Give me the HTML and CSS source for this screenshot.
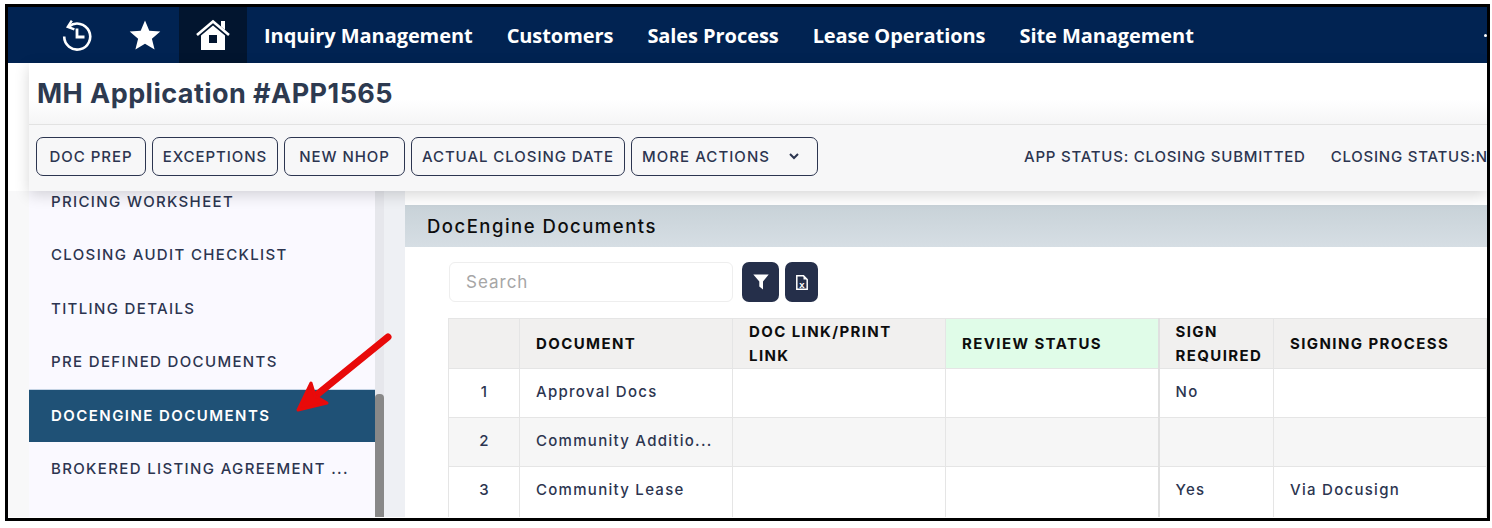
FILE: index.html
```html
<!DOCTYPE html>
<html lang="en">
<head>
<meta charset="utf-8">
<title>MH Application #APP1565</title>
<link rel="stylesheet" href="styles.css">
</head>
<body>
<div class="frame">
  <nav class="nav">
    <a class="nav-icon nav-history">
      <svg width="32" height="32" viewBox="0 0 32 32" fill="none" stroke="#fff" stroke-width="2.6">
        <path d="M8 7.5A13 13 0 1 1 3.2 17.5"/>
        <path d="M10.8 1.6 6.8 7.8l6.6 2.6" stroke-width="2.4"/>
        <path d="M16 9.5V18h7.5" stroke-width="2.8"/>
      </svg>
    </a>
    <a class="nav-icon nav-star">
      <svg width="32" height="32" viewBox="0 0 32 32"><path fill="#fff" d="M16 1.5l4.3 10.3 11 .8-8.4 7.2 2.7 10.8L16 24.8 6.400 30.600l2.700-10.800-8.400-7.200 11-.8z"/></svg>
    </a>
    <a class="nav-home">
      <svg width="34" height="32" viewBox="0 0 34 32">
        <path fill="none" stroke="#fff" stroke-width="2.600" d="M1 16 17 2.500 33 16"/>
        <path fill="#fff" d="M25 2h4v9l-4-3.400z"/>
        <path fill="#fff" fill-rule="evenodd" d="M17 6.500 29 16.500V31H5V16.500zM13 16v8h8v-8z"/>
      </svg>
    </a>
    <ul class="nav-menu">
      <li>Inquiry Management</li>
      <li>Customers</li>
      <li>Sales Process</li>
      <li>Lease Operations</li>
      <li>Site Management</li>
    </ul>
    <span class="nav-dot"></span>
  </nav>

  <div class="workspace">
    <header class="page-head">
      <h1 class="page-title">MH Application #APP1565</h1>
      <div class="actions">
        <button class="btn">DOC PREP</button>
        <button class="btn">EXCEPTIONS</button>
        <button class="btn">NEW NHOP</button>
        <button class="btn">ACTUAL CLOSING DATE</button>
        <button class="btn btn-more">MORE ACTIONS
          <svg width="10" height="7" viewBox="0 0 10 7" fill="none" stroke="#2c3550" stroke-width="2"><path d="M1 1l4 4 4-4"/></svg>
        </button>
        <span class="status status-app">APP STATUS: CLOSING SUBMITTED</span>
        <span class="status status-closing">CLOSING STATUS:NOT STARTED</span>
      </div>
    </header>

    <div class="content">
      <div class="gutter"></div>
      <aside class="sidebar">
        <ul class="side-list">
          <li>PRICING WORKSHEET</li>
          <li>CLOSING AUDIT CHECKLIST</li>
          <li>TITLING DETAILS</li>
          <li>PRE DEFINED DOCUMENTS</li>
          <li class="active">DOCENGINE DOCUMENTS</li>
          <li>BROKERED LISTING AGREEMENT ...</li>
          <li>ASSIGNED TEAM</li>
        </ul>
      </aside>
      <div class="scroll-track"><div class="scroll-thumb"></div></div>
      <main class="main">
        <section class="panel">
          <h2 class="panel-title">DocEngine Documents</h2>
          <div class="toolbar">
            <div class="search">Search</div>
            <button class="icon-btn icon-filter">
              <svg width="16" height="16" viewBox="0 0 16 16"><path fill="#fff" d="M0.300 0.500h15.400L10 7.500v8L6.300 12.500v-5z"/></svg>
            </button>
            <button class="icon-btn icon-excel">
              <svg width="12" height="15" viewBox="0 0 12 15">
                <path fill="none" stroke="#fff" stroke-width="1.500" d="M.8.8h6.700l3.700 3.700v9.700H.8z"/>
                <path fill="#fff" d="M7.500.8v3.700h3.700z"/>
                <text x="6" y="12.500" text-anchor="middle" class="icon-x">x</text>
              </svg>
            </button>
          </div>
          <table class="grid">
            <colgroup>
              <col class="c-num"><col class="c-doc"><col class="c-link"><col class="c-review"><col class="c-sign"><col class="c-proc">
            </colgroup>
            <thead>
              <tr>
                <th></th>
                <th>DOCUMENT</th>
                <th>DOC LINK/PRINT<br>LINK</th>
                <th class="th-green">REVIEW STATUS</th>
                <th class="sep">SIGN REQUIRED</th>
                <th>SIGNING PROCESS</th>
              </tr>
            </thead>
            <tbody>
              <tr>
                <td class="num">1</td><td>Approval Docs</td><td></td><td></td><td class="sep">No</td><td></td>
              </tr>
              <tr class="alt">
                <td class="num">2</td><td>Community Additio...</td><td></td><td></td><td class="sep"></td><td></td>
              </tr>
              <tr class="last">
                <td class="num">3</td><td>Community Lease</td><td></td><td></td><td class="sep">Yes</td><td>Via Docusign</td>
              </tr>
            </tbody>
          </table>
        </section>
      </main>
    </div>
  </div>

  <svg class="arrow" width="100" height="84" viewBox="0 0 100 84" fill="none" stroke="#e80a0a" stroke-linecap="round" stroke-linejoin="round">
    <path d="M93 5 8 74" stroke-width="7"/>
    <path fill="#e80a0a" stroke-width="3" d="M3 78 16 51 20 64 32 71z"/>
  </svg>
</div>
</body>
</html>
```
FILE: styles.css
```css
* { box-sizing: border-box; }
html, body { margin: 0; padding: 0; background: #fff; }
body { font-family: "Inter", "Liberation Sans", sans-serif; color: #2c3550; }

.frame {
  position: relative;
  width: 1485px;
  height: 517px;
  margin: 4px 0 0 5px;
  border: 3px solid #000;
  overflow: hidden;
  background: #fff;
}

/* top nav */
.nav {
  display: flex;
  align-items: stretch;
  height: 56px;
  background: #012352;
  color: #fff;
  position: relative;
}
.nav-icon, .nav-home { display: flex; align-items: center; justify-content: center; }
.nav-history { width: 68px; margin-left: 35px; }
.nav-star { width: 68px; }
.nav-home { width: 68px; background: #02152f; }
.nav-menu {
  display: flex;
  gap: 34px;
  margin: 0 0 0 17px;
  padding: 2px 0 0;
  list-style: none;
  align-items: center;
  font: 700 20px/1 "Open Sans", sans-serif;
  letter-spacing: -.07px;
  white-space: nowrap;
}
.nav-dot {
  position: absolute;
  right: 0;
  top: 27px;
  width: 3px;
  height: 3px;
  border-radius: 50%;
  background: #fff;
}

/* layout */
.workspace { display: flex; flex-direction: column; height: 454px; background: #fff; }
.page-head {
  position: relative;
  z-index: 2;
  margin-left: 21px;
  box-shadow: 0 4px 14px rgba(0, 0, 0, .16);
}
.page-title {
  height: 62px;
  margin: 0;
  padding: 0 8px;
  font-size: 27px;
  font-weight: 700;
  line-height: 61px;
  color: #2d3a50;
  background: linear-gradient(#fff 60%, #f5f5f6);
  border-bottom: 1px solid #e2e2e2;
  white-space: nowrap;
  letter-spacing: .45px;
}
.actions {
  display: flex;
  align-items: center;
  gap: 6px;
  height: 66px;
  padding: 0 0 3px 7px;
  background: #f7f7f8;
  white-space: nowrap;
  overflow: hidden;
}
.btn {
  display: flex;
  flex-shrink: 0;
  align-items: center;
  justify-content: center;
  height: 39px;
  padding: 0;
  font: 500 15px "Inter", sans-serif;
  letter-spacing: .95px;
  color: #2c3550;
  background: transparent;
  border: 1.500px solid #2c3550;
  border-radius: 7px;
}
.btn:nth-child(1) { width: 110px; }
.btn:nth-child(2) { width: 126px; }
.btn:nth-child(3) { width: 121px; }
.btn:nth-child(4) { width: 214px; }
.btn-more { width: 187px; gap: 19px; justify-content: flex-start; padding-left: 10px; letter-spacing: 1.05px; }
.status { flex-shrink: 0; font-size: 15px; font-weight: 500; letter-spacing: .77px; color: #2c3550; }
.status-app { margin-left: 200px; }
.status-closing { margin-left: 19px; }

.content { display: flex; flex: 1; min-height: 0; }
.gutter { width: 21px; background: #f8f8f9; }
.sidebar { width: 346px; background: #faf9ff; overflow: hidden; }
.side-list { margin: -16.500px 0 0; padding: 0; list-style: none; }
.side-list li {
  display: flex;
  align-items: center;
  height: 53.500px;
  padding-left: 22px;
  font-size: 15px;
  font-weight: 500;
  letter-spacing: 1.35px;
  white-space: nowrap;
}
.side-list .active { background: #1f5176; color: #fff; font-weight: 600; letter-spacing: 1.45px; border-top: 1px solid #c4d3e4; }
.scroll-track {
  width: 30px;
  background: linear-gradient(90deg, #e6e7ec 0, #e6e7ec 9px, #eef0f4 9px);
  overflow: hidden;
}
.scroll-thumb { width: 9px; height: 140px; margin-top: 203px; background: #888; border-radius: 4px 4px 0 0; }

.main { flex: 1; min-width: 0; padding-top: 14px; background: #fff; overflow: hidden; }
.panel-title {
  height: 42px;
  margin: 0;
  padding-left: 22px;
  font-size: 18.500px;
  font-weight: 500;
  line-height: 42px;
  letter-spacing: 1.5px;
  color: #0d0d0d;
  background: linear-gradient(#c8d2d8, #d6dee4);
}
.toolbar { display: flex; gap: 6px; margin: 15px 0 16px 44px; }
.search {
  width: 284px;
  height: 40px;
  margin-right: 3px;
  padding-left: 16px;
  font-size: 17px;
  line-height: 38px;
  letter-spacing: 1px;
  color: #a6a6a6;
  background: #fff;
  border: 1px solid #eee;
  border-radius: 6px;
}
.icon-btn {
  display: flex;
  align-items: center;
  justify-content: center;
  height: 40px;
  padding: 0;
  background: #252f4a;
  border: 0;
  border-radius: 7px;
}
.icon-filter { width: 37px; }
.icon-excel { width: 33px; }
.icon-x { font: 700 9.500px "Liberation Sans", sans-serif; fill: #fff; }

.grid {
  width: 1038px;
  margin-left: 43px;
  table-layout: fixed;
  border-collapse: collapse;
  font-size: 15px;
}
.c-num { width: 71px; }
.c-doc { width: 213px; }
.c-link { width: 213px; }
.c-review { width: 213px; }
.c-sign { width: 115px; }
.c-proc { width: 213px; }
.grid th, .grid td { border: 1px solid #e5e5e5; padding: 0 15px 4px 16px; text-align: left; }
.grid th {
  height: 50px;
  padding-bottom: 0;
  font-weight: 700;
  line-height: 24px;
  letter-spacing: 1.4px;
  color: #0d0d0d;
  background: #f1f0ef;
}
.grid .th-green { background: #e0fce8; }
.grid td { height: 49px; font-weight: 500; letter-spacing: 1.28px; color: #2c3550; white-space: nowrap; overflow: hidden; }
.grid .num { text-align: center; }
.grid .alt td { background: #f6f6f6; }
.grid .last td { height: 53px; padding-bottom: 7px; }
.grid .sep { border-left: 2px solid #e0e0e0; }

.arrow { position: absolute; left: 287px; top: 325px; z-index: 3; }
```
